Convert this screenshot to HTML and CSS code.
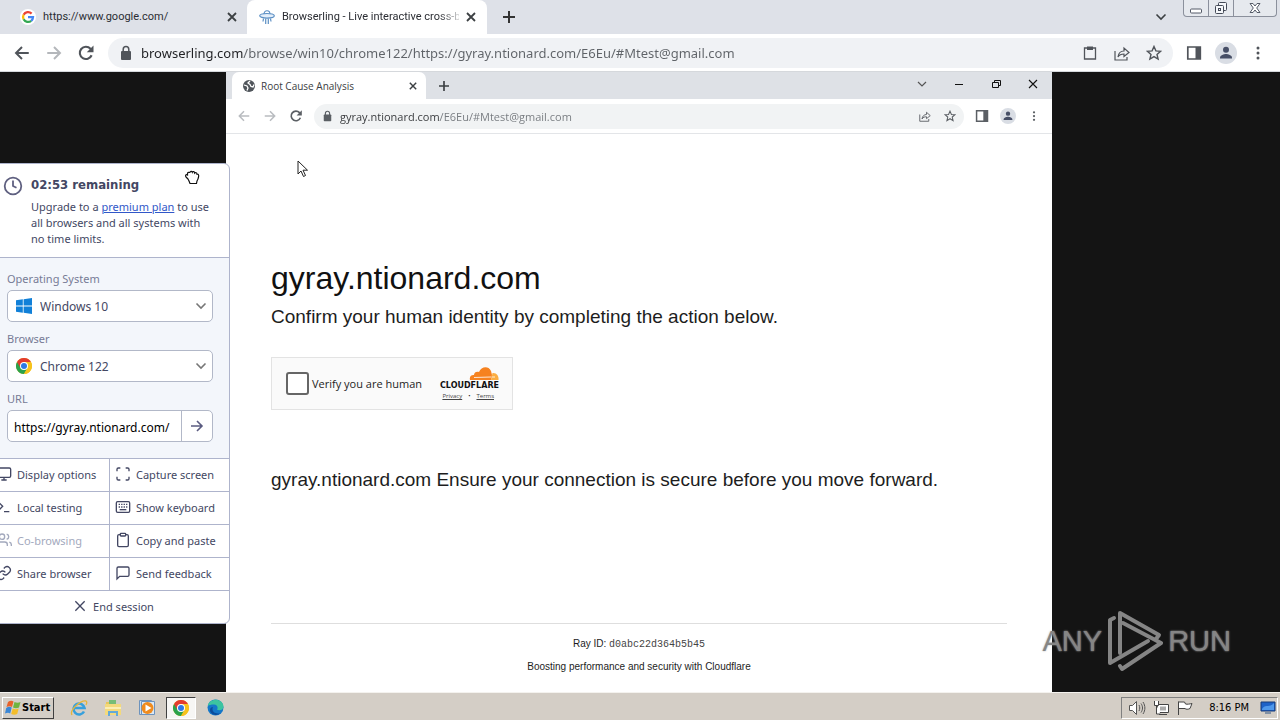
FILE: index.html
```html
<!DOCTYPE html>
<html lang="en">
<head>
<meta charset="utf-8">
<title>Browserling</title>
<link rel="stylesheet" href="styles.css">
</head>
<body>
<svg class="defs" width="0" height="0" aria-hidden="true">
  <symbol id="back" viewBox="0 0 24 24"><path d="M21 12H4M12 4l-8 8 8 8" fill="none" stroke="currentColor" stroke-width="2.6"/></symbol>
  <symbol id="forward" viewBox="0 0 24 24"><path d="M3 12h17M12 4l8 8-8 8" fill="none" stroke="currentColor" stroke-width="2.6"/></symbol>
  <symbol id="reload" viewBox="0 0 24 24"><path d="M19.5 15A8.2 8.2 0 1 1 18 6.3L20 8.5" fill="none" stroke="currentColor" stroke-width="2.8"/><path d="M22 2v9h-9z" fill="currentColor"/></symbol>
  <symbol id="lock" viewBox="0 0 12 16"><rect x="1" y="6" width="10" height="9" rx="1" fill="currentColor"/><path d="M3.2 7V4.400a2.800 2.800 0 0 1 5.600 0V7" fill="none" stroke="currentColor" stroke-width="1.500"/></symbol>
  <symbol id="close" viewBox="0 0 10 10"><path d="M1 1l8 8M9 1L1 9" stroke="currentColor" stroke-width="1.800"/></symbol>
  <symbol id="plus" viewBox="0 0 12 12"><path d="M6 0v12M0 6h12" stroke="currentColor" stroke-width="2"/></symbol>
  <symbol id="chevron" viewBox="0 0 12 12"><path d="M1.500 3.500L6 8l4.500-4.500" fill="none" stroke="currentColor" stroke-width="1.600"/></symbol>
  <symbol id="clipboard" viewBox="0 0 24 24"><path d="M16 4h2a2 2 0 0 1 2 2v14a2 2 0 0 1-2 2H6a2 2 0 0 1-2-2V6a2 2 0 0 1 2-2h2" fill="none" stroke="currentColor" stroke-width="2"/><rect x="8" y="2" width="8" height="4" rx="1" fill="none" stroke="currentColor" stroke-width="2"/></symbol>
  <symbol id="paste" viewBox="0 0 16 16"><path d="M2.500 3h11v11h-11z" fill="none" stroke="currentColor" stroke-width="1.300"/><path d="M5 1.500h6V5H5z" fill="currentColor"/></symbol>
  <symbol id="share" viewBox="0 0 16 16"><path d="M1 6v9h12v-3M4 12c.5-4 3-6 6-6V3l5 4.500-5 4V9c-2.500 0-4.500.5-6 3z" fill="none" stroke="currentColor" stroke-width="1.200"/></symbol>
  <symbol id="star" viewBox="0 0 16 16"><path d="M8 1.500l1.900 4.400 4.700.4-3.600 3.100 1.100 4.700L8 11.600l-4.100 2.500L5 9.400 1.400 6.300l4.700-.4z" fill="none" stroke="currentColor" stroke-width="1.400"/></symbol>
  <symbol id="sidebar" viewBox="0 0 16 16"><path d="M1.800 2h12.500v12H1.800z" fill="none" stroke="currentColor" stroke-width="1.700"/><path d="M9.500 2h5v12h-5z" fill="currentColor"/></symbol>
  <symbol id="person" viewBox="0 0 22 22"><circle cx="11" cy="11" r="11" fill="#d9dde4"/><circle cx="11" cy="7.800" r="3" fill="#474f66"/><path d="M5 16.500v-1c0-2.300 4-3.500 6-3.500s6 1.200 6 3.500v1z" fill="#474f66"/></symbol>
  <symbol id="dots" viewBox="0 0 4 16"><circle cx="2" cy="3" r="1.500" fill="currentColor"/><circle cx="2" cy="8" r="1.500" fill="currentColor"/><circle cx="2" cy="13" r="1.500" fill="currentColor"/></symbol>
  <symbol id="chrome" viewBox="0 0 16 16"><circle cx="8" cy="8" r="8" fill="#f6c21c"/><path d="M1.070 4A8 8 0 0 0 8 16l3.460-6L8 8z" fill="#2ba24c"/><path d="M8 4h6.930A8 8 0 0 0 1.070 4L4.540 10z" fill="#e33b2e"/><path d="M14.930 4H8v4l3.460 2L8 16a8 8 0 0 0 6.930-12z" fill="#f6c21c"/><circle cx="8" cy="8" r="4" fill="#fff"/><circle cx="8" cy="8" r="3" fill="#2e79e5"/></symbol>
</svg>

<div class="desktop">
  <header class="strip">
    <div class="tab tab-idle">
      <svg class="i16" viewBox="0 0 16 16"><circle cx="8" cy="8" r="8" fill="#fff"/><g fill="none" stroke-width="2.300"><path d="M11.600 4.600A5 5 0 0 0 3.600 5.700" stroke="#ea4335"/><path d="M3.600 5.700a5 5 0 0 0 0 4.600" stroke="#fbbc05"/><path d="M3.600 10.300a5 5 0 0 0 7.600 1.500" stroke="#34a853"/><path d="M11.200 11.800A5 5 0 0 0 13 8.200H8" stroke="#4285f4"/></g></svg>
      <span class="tab-title">https://www.google.com/</span>
      <button class="plain" aria-label="Close tab"><svg class="i10"><use href="#close"/></svg></button>
    </div>
    <div class="tab tab-live">
      <svg class="i16" viewBox="0 0 16 16" fill="none" stroke="#5b8fc4" stroke-width="1.200"><path d="M5 5.500C5 .5 11 .5 11 5.500"/><ellipse cx="8" cy="6.800" rx="7.300" ry="2.300" fill="#e3eefa"/><path d="M4.500 9.500l-.5 3M6.700 9.500V15M9.300 9.500V15M11.500 9.500l.5 3"/></svg>
      <span class="tab-title fade">Browserling - Live interactive cross-b</span>
      <button class="plain" aria-label="Close tab"><svg class="i10"><use href="#close"/></svg></button>
    </div>
    <button class="plain new-tab" aria-label="New tab"><svg class="i12"><use href="#plus"/></svg></button>
    <div class="window-side">
      <svg class="i12"><use href="#chevron"/></svg>
      <div class="caption">
        <button aria-label="Minimize"><svg width="14" height="14" viewBox="0 0 14 14"><rect x="1.500" y="8" width="11" height="4" rx="1" fill="#fff" stroke="#555b68"/></svg></button>
        <button aria-label="Restore"><svg width="14" height="14" viewBox="0 0 14 14" fill="#f5f7fa" stroke="#444a57"><rect x="4.500" y="1.500" width="8" height="8" rx="1"/><rect x="1.500" y="4.500" width="8" height="8" rx="1"/><rect x="4.500" y="7.500" width="2" height="2"/></svg></button>
        <button class="wide" aria-label="Close"><svg width="14" height="14" viewBox="0 0 14 14"><path d="M2 2.500h3l2 2.500 2-2.500h3L8.700 7l3.300 4.500H9L7 9l-2 2.500H2L5.300 7z" fill="#fff" stroke="#555b68"/></svg></button>
      </div>
    </div>
  </header>
  <div class="toolbar">
    <button class="plain" aria-label="Back"><svg class="i18"><use href="#back"/></svg></button>
    <button class="plain dim" aria-label="Forward"><svg class="i18"><use href="#forward"/></svg></button>
    <button class="plain" aria-label="Reload"><svg class="i18"><use href="#reload"/></svg></button>
    <div class="omnibox">
      <svg class="lock"><use href="#lock"/></svg>
      <input class="address" type="text" aria-label="Address" value="browserling.com/browse/win10/chrome122/https://gyray.ntionard.com/E6Eu/#Mtest@gmail.com">
      <svg class="i16"><use href="#paste"/></svg>
      <svg class="i16"><use href="#share"/></svg>
      <svg class="i16"><use href="#star"/></svg>
    </div>
    <svg class="i16"><use href="#sidebar"/></svg>
    <svg class="i22"><use href="#person"/></svg>
    <svg class="dots"><use href="#dots"/></svg>
  </div>

  <main class="stage">
    <section class="remote">
      <div class="r-strip">
        <div class="r-tab">
          <svg class="i12" viewBox="0 0 12 12"><circle cx="6" cy="6" r="6" fill="#50555b"/><path d="M1 5l3 1 1 2-1 2.500M7 1L5 3l2 1.500 1 2 2 .5 1-2.500" fill="none" stroke="#fff" stroke-width="1.300"/></svg>
          <span class="r-title">Root Cause Analysis</span>
          <button class="plain" aria-label="Close tab"><svg class="i8"><use href="#close"/></svg></button>
        </div>
        <button class="plain r-new" aria-label="New tab"><svg class="i10"><use href="#plus"/></svg></button>
        <div class="r-caption">
          <svg class="i12" viewBox="0 0 12 12"><path d="M2 4l4 4 4-4" fill="none" stroke="#555" stroke-width="1.200"/></svg>
          <svg class="i12" viewBox="0 0 12 12"><path d="M2 6.500h8" stroke="#111"/></svg>
          <svg class="i12" viewBox="0 0 12 12" fill="none" stroke="#111"><path d="M2.500 4.500h6v5h-6zM4.500 4.500v-2h6v5h-2"/></svg>
          <svg class="i12" viewBox="0 0 12 12"><path d="M2 2l8 8M10 2l-8 8" stroke="#111" stroke-width="1.100"/></svg>
        </div>
      </div>
      <div class="r-toolbar">
        <button class="plain dim" aria-label="Back"><svg class="i14"><use href="#back"/></svg></button>
        <button class="plain dim" aria-label="Forward"><svg class="i14"><use href="#forward"/></svg></button>
        <button class="plain" aria-label="Reload"><svg class="i14"><use href="#reload"/></svg></button>
        <div class="r-omnibox">
          <svg class="r-lock"><use href="#lock"/></svg>
          <input class="r-address" type="text" aria-label="Remote address" value="gyray.ntionard.com/E6Eu/#Mtest@gmail.com">
          <svg class="i12"><use href="#share"/></svg>
          <svg class="i12"><use href="#star"/></svg>
        </div>
        <svg class="i14"><use href="#sidebar"/></svg>
        <svg class="i16"><use href="#person"/></svg>
        <svg class="r-dots"><use href="#dots"/></svg>
      </div>
      <article class="page">
        <h1>gyray.ntionard.com</h1>
        <p class="lead">Confirm your human identity by completing the action below.</p>
        <div class="turnstile">
          <label class="verify"><input type="checkbox"> <span>Verify you are human</span></label>
          <div class="cf">
            <svg width="30" height="15" viewBox="0 0 30 15"><path d="M1 14c-1-4 2-5.500 4-5 0-3 3-4 5-3C12 1 19-1 22 5l1 4-1 5z" fill="#f6821f"/><path d="M22 14l1.500-7c4-.5 6.500 3 6 7z" fill="#fbad41"/><path d="M5 11.500l17-.5M23 11h3" stroke="#fff" stroke-width=".8"/></svg>
            <span class="cf-name">CLOUDFLARE</span>
            <span class="cf-links"><a href="#privacy">Privacy</a><span>•</span><a href="#terms">Terms</a></span>
          </div>
        </div>
        <p class="lead note">gyray.ntionard.com Ensure your connection is secure before you move forward.</p>
        <footer class="ray">
          <div>Ray ID: <code>d0abc22d364b5b45</code></div>
          <div>Boosting performance and security with Cloudflare</div>
        </footer>
      </article>
      <svg class="cursor" width="12" height="18" viewBox="0 0 12 18"><path d="M1 1v13l3-3 2.500 5.500 2-1L6 10.200h4.500z" fill="#fff" stroke="#222"/></svg>
    </section>

    <aside class="panel">
      <div class="timer">
        <svg class="i20" viewBox="0 0 20 20" fill="none" stroke="#5f6080" stroke-width="1.800"><circle cx="10" cy="10" r="8.300"/><path d="M10 4.500V10l3.500 1.800"/></svg>
        <div>
          <h2>02:53 remaining</h2>
          <p>Upgrade to a <a href="#premium">premium plan</a> to use all browsers and all systems with no time limits.</p>
        </div>
      </div>
      <form class="setup">
        <label for="os">Operating System</label>
        <div class="pick">
          <svg class="i16" viewBox="0 0 16 16" fill="#1180d8"><path d="M0 2.300l6.800-1v6.300H0zM7.600 1.200L16 0v7.600H7.600zM0 8.400h6.800v6.300L0 13.700zM7.600 8.400H16V16l-8.400-1.200z"/></svg>
          <select id="os"><option>Windows 10</option></select>
          <svg class="i12"><use href="#chevron"/></svg>
        </div>
        <label for="browser">Browser</label>
        <div class="pick">
          <svg class="i16"><use href="#chrome"/></svg>
          <select id="browser"><option>Chrome 122</option></select>
          <svg class="i12"><use href="#chevron"/></svg>
        </div>
        <label for="url">URL</label>
        <div class="go">
          <input id="url" type="text" value="https://gyray.ntionard.com/">
          <button type="button" aria-label="Go"><svg width="14" height="14" viewBox="0 0 14 14"><path d="M1 7h11M7 2l5 5-5 5" fill="none" stroke="#5a5b80" stroke-width="1.600"/></svg></button>
        </div>
      </form>
      <div class="actions">
        <button><svg class="i16" viewBox="0 0 24 24"><rect x="2" y="3" width="20" height="14" rx="2"/><path d="M8 21h8M12 17v4"/></svg>Display options</button>
        <button><svg class="i16" viewBox="0 0 24 24"><path d="M8 3H5a2 2 0 0 0-2 2v3M21 8V5a2 2 0 0 0-2-2h-3M16 21h3a2 2 0 0 0 2-2v-3M3 16v3a2 2 0 0 0 2 2h3"/></svg>Capture screen</button>
        <button><svg class="i16" viewBox="0 0 24 24"><path d="M4 17l6-6-6-6M12 19h8"/></svg>Local testing</button>
        <button><svg class="i16" viewBox="0 0 24 24"><rect x="2" y="4" width="20" height="16" rx="2"/><path d="M5.500 8h13M5.500 12h13" stroke-dasharray="2 1.700"/><path d="M7 16h10"/></svg>Show keyboard</button>
        <button disabled><svg class="i16" viewBox="0 0 24 24"><path d="M17 21v-2a4 4 0 0 0-4-4H5a4 4 0 0 0-4 4v2M23 21v-2a4 4 0 0 0-3-3.900M16 3.100a4 4 0 0 1 0 7.800"/><circle cx="9" cy="7" r="4"/></svg>Co-browsing</button>
        <button><svg class="i16"><use href="#clipboard"/></svg>Copy and paste</button>
        <button><svg class="i16" viewBox="0 0 24 24"><path d="M10 13a5 5 0 0 0 7.500.5l3-3a5 5 0 0 0-7-7l-1.800 1.700M14 11a5 5 0 0 0-7.500-.5l-3 3a5 5 0 0 0 7 7l1.800-1.700"/></svg>Share browser</button>
        <button><svg class="i16" viewBox="0 0 24 24"><path d="M21 15a2 2 0 0 1-2 2H7l-4 4V5a2 2 0 0 1 2-2h14a2 2 0 0 1 2 2z"/></svg>Send feedback</button>
        <button class="end"><svg class="i16" viewBox="0 0 24 24"><path d="M19 5L5 19M5 5l14 14"/></svg>End session</button>
      </div>
      <svg class="hand" width="16" height="16" viewBox="0 0 16 16"><path d="M4 10L2 8C.8 6.500 2 5 3.500 6V4.500C3.500 3 5.500 3 5.700 4 6 2 8 2 8.300 3.200c.5-1 2.400-.8 2.400.8.800-.8 2.300-.3 2.300 1.200 1.500-.2 1.900.8 1.600 2.400-.3 2-.8 3.200-1.600 4.400L12.500 14.500H6L5 12z" fill="#fff" stroke="#111" stroke-width="1.200"/></svg>
    </aside>

    <div class="watermark">
      <span>ANY</span>
      <svg width="56" height="62" viewBox="0 0 56 62" fill="none" stroke="currentColor" stroke-width="4" stroke-linejoin="round" stroke-linecap="round"><path d="M7 8L3 10V53L41 31"/><path d="M13 43V3L52 25l-3 4"/><path d="M16 13l38 20-39 26-2-3"/></svg>
      <span>RUN</span>
    </div>
  </main>

  <footer class="taskbar">
    <button class="start"><svg width="17" height="16" viewBox="0 0 17 16"><path d="M3 2c2-1.500 4-1.500 5.500-.5L7 7C5.500 6 3.500 6 1.500 7z" fill="#e8622a"/><path d="M9.500 2c2 1 4 1 6 0L14 7.500c-2 1-4 1-6 0z" fill="#6fb43f"/><path d="M1.200 8c2-1.500 4-1.500 5.500-.5l-1.500 6C4 12.500 2 12.500 0 13.500z" fill="#3b87d6"/><path d="M7.700 8.500c2 1 4 1 6 0l-1.500 5.500c-2 1-4 1-6 0z" fill="#f3bd2b"/></svg>Start</button>
    <button class="task" aria-label="Internet Explorer"><svg width="18" height="18" viewBox="0 0 18 18" fill="none"><path d="M14 12.500A5.500 5.500 0 1 1 14.500 9H5" stroke="#37a0dc" stroke-width="2.600"/><path d="M2 16C-1 11 11 1 16 2c1 .5 1 2 0 4" stroke="#e5b53a" stroke-width="1.300"/></svg></button>
    <button class="task" aria-label="File Explorer"><svg width="18" height="18" viewBox="0 0 18 18"><path d="M2 3h6l1 2h6v11H2z" fill="#e9c65d"/><path d="M5 1h7v5H5z" fill="#77bd76"/><path d="M1 5h16v11H1z" fill="#f3d97c"/><path d="M1 8h16v2H1z" fill="#fbeeb5"/><path d="M4 17v-5h10v5h-2v-3H6v3z" fill="#62a9d9"/></svg></button>
    <button class="task" aria-label="Media Player"><svg width="18" height="18" viewBox="0 0 18 18"><path d="M1.500 1.500h12v14h-12z" fill="#c9ddf0" stroke="#6d93bd"/><path d="M3.500 2.500h13v13h-13z" fill="#dce9f5" stroke="#6d93bd"/><circle cx="9.500" cy="9" r="6" fill="#f08b1d"/><path d="M7.500 5.500v7l6-3.500z" fill="#fff"/></svg></button>
    <button class="task active" aria-label="Chrome"><svg class="i16"><use href="#chrome"/></svg></button>
    <button class="task" aria-label="Edge"><svg width="17" height="17" viewBox="0 0 17 17"><circle cx="8.500" cy="8.500" r="8" fill="#1477c9"/><path d="M.8 7C2-1.500 16-1.500 16.500 7.500c0 4-5 4.500-6.500 3 1.500-2 0-5-3-5C4 5.500 2 6 .8 7z" fill="#3cc4a0"/><path d="M6 8c-2 4 2 8 8 6-5 4-11 1-11-3 0-2 1.500-3 3-3z" fill="#0c4c9c"/></svg></button>
    <div class="tray">
      <svg width="18" height="16" viewBox="0 0 18 16" fill="#fff" stroke="#555"><path d="M1.500 5.500h3l4-4v13l-4-4h-3z"/><path d="M11 5c1 2 1 4 0 6M13 3.500c2 3 2 6 0 9M15 2c2.500 4 2.500 8 0 12" fill="none"/></svg>
      <svg width="16" height="16" viewBox="0 0 16 16" fill="#fff" stroke="#444"><path d="M4.500 4.500h11v8h-11zM6 14.500h8"/><path d="M7 6.500h6v4H7z" fill="#aaa" stroke="none"/><path d="M1.500 1v4.500h4V1M3.500 5v9h4"/></svg>
      <svg width="18" height="16" viewBox="0 0 18 16" fill="#fff" stroke="#444"><path d="M2.500 15V1.500M2.500 2h6l1 2c2 .5 4 0 6.500-.5l-2 5c-2 1-4 1-5 0H2.500"/></svg>
      <time>8:16 PM</time>
      <svg width="16" height="16" viewBox="0 0 16 16"><path d="M1 2h14v9H1z" fill="#1e62c8" stroke="#173b78"/><path d="M2 9c3-5 8-1 12-6v7H2z" fill="#4f98eb"/><path d="M5 12h6v2H5z" fill="#8191a5"/></svg>
    </div>
  </footer>
</div>
</body>
</html>
```

FILE: styles.css
```css
* { box-sizing: border-box; }
body { margin: 0; font-family: "Noto Sans", sans-serif; font-size: 12px; color: #3c4043; }
button, input, select { font: inherit; color: inherit; }
.defs { position: absolute; }
svg { flex: none; display: block; }
.i8 { width: 8px; height: 8px; }
.i10 { width: 10px; height: 10px; }
.i12 { width: 12px; height: 12px; }
.i14 { width: 14px; height: 14px; }
.i16 { width: 16px; height: 16px; }
.i18 { width: 18px; height: 18px; }
.i20 { width: 20px; height: 20px; }
.i22 { width: 22px; height: 22px; }
.plain { border: 0; background: none; padding: 0; display: flex; justify-content: center; }

.desktop { display: flex; flex-direction: column; min-height: 100vh; }

/* Host browser */
.strip { display: flex; height: 34px; background: #dee1e8; }
.tab { display: flex; align-items: center; gap: 7px; }
.tab-idle { width: 247px; padding: 0 10px 0 20px; }
.tab-live { width: 240px; padding: 0 11px 0 12px; background: #fff; border-radius: 8px 8px 0 0; }
.tab-title { flex: 1; min-width: 0; white-space: nowrap; font: 11px/18px Roboto, sans-serif; color: #2b2d33; }
.fade { -webkit-mask-image: linear-gradient(to right, #000 88%, #0003); mask-image: linear-gradient(to right, #000 88%, #0003); }
.new-tab { align-items: center; margin-left: 16px; color: #333; }
.window-side { margin-left: auto; display: flex; align-items: center; gap: 16px; padding-right: 3px; }
.caption { display: flex; align-self: flex-start; height: 17px; border: 1px solid #8b909c; border-top: 0; border-radius: 0 0 4px 4px; background: #e6e9ee; }
.caption button { width: 25px; padding: 0; display: flex; align-items: center; justify-content: center; border: 0; border-right: 1px solid #8b909c; background: none; }
.caption .wide { width: 42px; border-right: 0; }

.toolbar { display: flex; align-items: center; gap: 13px; height: 38px; padding: 0 14px 0 12px; background: #fff; border-bottom: 1px solid #d5d8dc; color: #50545a; }
.toolbar .plain { width: 19px; }
.toolbar .dim { color: #b4b7bb; }
.omnibox { flex: 1; min-width: 0; display: flex; align-items: center; gap: 16px; height: 30px; padding: 0 11px 0 12px; border-radius: 15px; background: #f0f2f5; }
.lock { width: 12px; height: 16px; margin-right: -7px; }
.address, .r-address { flex: 1; min-width: 0; padding: 0; border: 0; color: transparent; -webkit-background-clip: text; background-clip: text; }
.address { font-size: 13px; background-image: linear-gradient(to right, #202124 102px, #5f6368 102px); }
.dots { width: 16px; height: 16px; }

/* Remote desktop */
.stage { position: relative; flex: 1; display: flex; justify-content: center; padding-right: 2px; background: #141414; }
.remote { position: relative; width: 826px; display: flex; flex-direction: column; background: #fff; }
.r-strip { display: flex; align-items: center; height: 27px; padding-left: 6px; background: #dee1e6; }
.r-tab { display: flex; align-items: center; gap: 6px; align-self: stretch; width: 194px; padding: 0 9px 0 11px; border-radius: 7px 7px 0 0; background: #fff; }
.r-title { flex: 1; font: 10px/16px "Open Sans", sans-serif; }
.r-new { margin-left: 13px; }
.r-caption { margin-left: auto; display: flex; gap: 25px; padding: 0 13px 4px 0; }
.r-toolbar { display: flex; align-items: center; gap: 11px; height: 35px; padding: 0 11px 0 10px; border-bottom: 1px solid #e3e5e8; color: #5b5f64; }
.r-toolbar .plain { width: 15px; }
.r-toolbar .dim { color: #b9bcc0; }
.r-omnibox { flex: 1; min-width: 0; display: flex; align-items: center; gap: 13px; height: 25px; padding: 0 8px 0 9px; border-radius: 13px; background: #f1f3f4; }
.r-lock { width: 9px; height: 12px; margin-right: -5px; }
.r-address { font-family: "Open Sans", sans-serif; font-size: 11px; background-image: linear-gradient(to right, #35373a 100px, #75797e 100px); }
.r-dots { width: 14px; height: 12px; }
.cursor { position: absolute; left: 71px; top: 88px; }

.page { flex: 1; display: flex; flex-direction: column; align-items: flex-start; padding: 126px 45px 14px; font-family: "Liberation Sans", Arial, sans-serif; color: #1d1d1d; }
h1 { margin: 0; font-size: 32px; font-weight: 400; line-height: 36px; color: #111; }
.lead { margin: 6px 0 0; font-size: 19px; line-height: 30px; }
.note { margin-top: 55px; }
.turnstile { display: flex; align-items: center; justify-content: space-between; width: 242px; height: 53px; margin-top: 25px; padding: 0 13px 0 14px; border: 1px solid #e3e3e3; background: #fafafa; }
.verify { display: flex; align-items: center; gap: 3px; font: 11px/16px "Open Sans", sans-serif; white-space: nowrap; }
.verify input { appearance: none; width: 23px; height: 23px; margin: 0; border: 2px solid #666; border-radius: 3px; background: #fff; }
.cf { display: flex; flex-direction: column; align-items: flex-end; }
.cf-name { font: bold 8px/10px "DejaVu Sans", sans-serif; color: #111; }
.cf-links { display: flex; gap: 6px; padding-right: 5px; font: 6px/10px "Open Sans", sans-serif; }
.cf-links a { color: #444; }
.ray { align-self: stretch; margin-top: auto; padding-top: 9px; border-top: 1px solid #dedede; font-size: 10px; line-height: 22px; text-align: center; }
.ray code { font-family: "Liberation Mono", monospace; font-size: 10px; color: #444; }

/* Browserling control panel */
.panel { position: absolute; left: -10px; top: 91px; width: 240px; border: 1px solid #aeb4cc; border-radius: 6px; background: #fff; color: #434763; overflow: hidden; }
.timer { display: flex; gap: 8px; height: 93px; padding: 12px 13px 0 12px; }
.timer h2 { margin: 0; font: bold 13px/18px "DejaVu Sans Condensed", "DejaVu Sans", sans-serif; }
.timer p { margin: 5px 0 0; font-size: 11px; line-height: 16px; }
.timer a { color: #3157c8; }
.setup { padding: 12px 16px 16px; border-top: 1px solid #aeb4cc; background: #f3f6fb; }
.setup label { display: block; margin-bottom: 3px; font-size: 11px; line-height: 17px; color: #777b96; }
.pick, .go { display: flex; align-items: center; height: 32px; margin-bottom: 8px; border: 1px solid #b2b8c8; border-radius: 5px; background: #fff; }
.pick { gap: 8px; padding: 0 5px 0 8px; color: #777; }
.pick select { appearance: none; flex: 1; min-width: 0; padding: 0; border: 0; background: none; color: #434763; font-size: 12px; }
.go { margin-bottom: 0; }
.go input { flex: 1; min-width: 0; height: 100%; padding: 3px 6px 0; border: 0; background: none; color: #000; }
.go button { display: flex; align-items: center; justify-content: center; width: 31px; height: 100%; padding: 0; border: 0; border-left: 1px solid #b2b8c8; background: none; }
.actions { display: grid; grid-template-columns: 1fr 1fr; }
.actions button { display: flex; align-items: center; gap: 5px; height: 33px; padding: 0 5px 2px; border: 0; border-top: 1px solid #aeb4cc; background: none; font-size: 11px; white-space: nowrap; }
.actions button:nth-child(odd):not(.end) { border-right: 1px solid #aeb4cc; }
.actions button:disabled { color: #a3a9bd; }
.actions svg { fill: none; stroke: currentColor; stroke-width: 2; }
.actions .end { grid-column: 1 / -1; justify-content: center; padding-left: 11px; }
.hand { position: absolute; right: 29px; top: 5px; }

.watermark { position: absolute; right: 49px; bottom: 20px; display: flex; align-items: center; gap: 5px; color: #858585; font: 29px/62px "Liberation Sans", Arial, sans-serif; text-shadow: 0 0 2px #aaa; }

/* Taskbar */
.taskbar { display: flex; align-items: center; gap: 4px; height: 28px; padding: 2px 2px 0; border-top: 1px solid #f4f2ee; background: #d4cec6; font: 11px "DejaVu Sans Condensed", "DejaVu Sans", sans-serif; color: #000; }
.start { display: flex; align-items: center; height: 22px; margin-right: 6px; padding: 0 3px 0 2px; border: 1px solid; border-color: #fff #404040 #404040 #fff; background: #d4cec6; font-weight: bold; }
.task { display: flex; align-items: center; justify-content: center; width: 30px; height: 22px; padding: 0; border: 1px solid transparent; background: none; }
.active { border-color: #404040 #fff #fff #404040; background: #f7f6f4; }
.tray { display: flex; align-items: center; gap: 7px; height: 22px; margin-left: auto; padding: 0 1px 0 6px; border: 1px solid; border-color: #808080 #fff #fff #808080; }
.tray time { margin: 0 4px 0 8px; }
```
